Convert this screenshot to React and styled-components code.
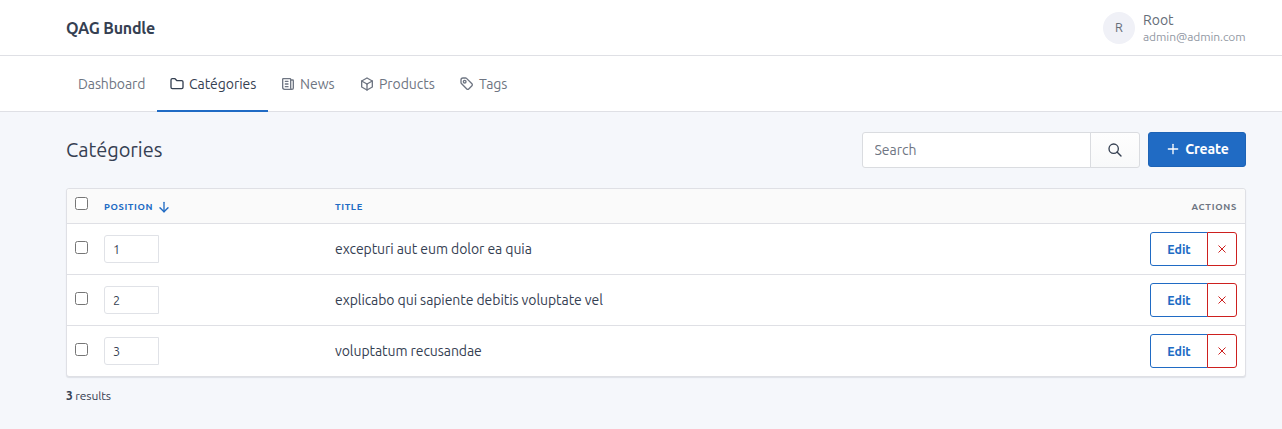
import React from 'react';
import styled, { createGlobalStyle, css } from 'styled-components';
import { TbFolder, TbNews, TbBox, TbSearch, TbPlus, TbArrowDown } from 'react-icons/tb';

const BLUE = '#206bc4';
const RED = '#cd201f';
const INK = '#354052';
const MUTED = '#6e7582';
const LINE = '#dfe0e5';

const GlobalStyle = createGlobalStyle`
  *, *::before, *::after { box-sizing: border-box; }
  body {
    margin: 0;
    min-height: 100vh;
    background: #f5f7fb;
    color: ${INK};
    font: 400 14px/20px Ubuntu, "Noto Sans", sans-serif;
  }
  button, input { font-family: inherit; color: inherit; }
`;

const Text = styled.span`
  letter-spacing: ${(p) => p.$track || 0}px;
  white-space: nowrap;
`;

const Bar = styled.div`
  height: 56px;
  padding: 0 36px 0 66px;
  display: flex;
  align-items: center;
  background: #fff;
  border-bottom: 1px solid ${LINE};
`;

const TopBar = styled(Bar)`
  justify-content: space-between;
`;

const Brand = styled.div`
  font-size: 16px;
  font-weight: 570;
`;

const User = styled.div`
  display: flex;
  align-items: center;
  gap: 8px;
  width: 143px;
`;

const Avatar = styled.div`
  width: 32px;
  height: 32px;
  flex: none;
  padding-bottom: 1px;
  border-radius: 50%;
  background: #f0f1f7;
  color: #656d77;
  font-size: 12.5px;
  display: flex;
  align-items: center;
  justify-content: center;
`;

const UserText = styled.div`
  display: flex;
  flex-direction: column;
  padding-top: 2px;
  color: #656d77;
`;

const UserName = styled(Text)`
  line-height: 16px;
`;

const UserMail = styled(Text)`
  font-size: 12px;
  line-height: 17px;
  color: #9299a4;
`;

const NavItem = styled.a`
  width: ${(p) => p.$width}px;
  height: 56px;
  align-self: flex-start;
  flex: none;
  padding-left: 12px;
  display: flex;
  align-items: center;
  gap: 4px;
  color: ${MUTED};
  border-bottom: 2px solid transparent;
  padding-top: 1px;
  svg { flex: none; }
  ${(p) => p.$active && css`
    color: ${INK};
    border-bottom-color: ${BLUE};
  `}
`;

const Page = styled.main`
  padding: 20px 36px 0 66px;
`;

const PageHeader = styled.header`
  height: 36px;
  display: flex;
  align-items: flex-start;
`;

const Title = styled.h1`
  margin: 0 auto 0 0;
  font-size: 20px;
  font-weight: 400;
  line-height: 36px;
`;

const SearchGroup = styled.form`
  display: flex;
  margin-right: 8px;
`;

const SearchInput = styled.input`
  width: 229px;
  height: 36px;
  padding: 0 11.5px;
  font-size: 14px;
  border: 1px solid #dadce0;
  border-radius: 3px 0 0 3px;
  background: #fff;
  &::placeholder { color: ${MUTED}; opacity: 1; }
`;

const SearchButton = styled.button`
  width: 50px;
  height: 36px;
  margin-left: -1px;
  padding: 0;
  display: flex;
  align-items: center;
  justify-content: center;
  border: 1px solid #dadce0;
  border-radius: 0 3px 3px 0;
  background: linear-gradient(#fefefe, #f8f9fa);
`;

const CreateButton = styled.button`
  width: 98px;
  height: 35px;
  padding: 0 0 1px;
  display: flex;
  align-items: center;
  justify-content: center;
  gap: 4px;
  border: 1px solid #1d63b6;
  border-radius: 3px;
  background: ${BLUE};
  color: #fff;
  font-size: 14px;
  font-weight: 590;
`;

const Card = styled.section`
  margin-top: 20px;
  border: 1px solid ${LINE};
  border-radius: 3px;
  background: #fff;
  box-shadow: 0 1px 1px rgba(53, 64, 82, 0.12);
`;

const Row = styled.div`
  display: grid;
  grid-template-columns: 29px 231px 1fr auto;
  align-items: center;
  height: ${(p) => (p.$head ? 35 : 51)}px;
  border-bottom: 1px solid ${LINE};
  &:last-child { border-bottom: 0; height: 50px; }
  ${(p) => p.$head && css`
    background: #fafafa;
    border-radius: 3px 3px 0 0;
  `}
`;

const Cell = styled.div`
  padding: 0 8px;
  display: flex;
  align-items: center;
`;

const HeadCell = styled(Cell)`
  gap: 3px;
  padding-top: 1px;
  font-size: 9.4px;
  font-weight: 580;
  line-height: 16px;
  text-transform: uppercase;
  color: ${(p) => (p.$sortable ? BLUE : MUTED)};
`;

const Check = styled.input.attrs({ type: 'checkbox' })`
  width: 13px;
  height: 13px;
  flex: none;
  margin: 0 0 ${(p) => p.$lift || 3}px;
`;

const PositionInput = styled.input`
  width: 55px;
  height: 28px;
  padding: 0 8px 1px;
  font-size: 12.6px;
  border: 1px solid #e0e2e7;
  border-radius: 3px 0 0 3px;
  background: #fff;
`;

const RowButton = styled.button`
  height: 34px;
  padding: 0;
  display: flex;
  align-items: center;
  justify-content: center;
  background: #fff;
  font-size: 12.4px;
  font-weight: 590;
`;

const EditButton = styled(RowButton)`
  width: 58px;
  border: 1px solid ${BLUE};
  border-radius: 3px 0 0 3px;
  color: ${BLUE};
`;

const DeleteButton = styled(RowButton)`
  width: 30px;
  margin-left: -1px;
  border: 1px solid ${RED};
  border-radius: 0 3px 3px 0;
  color: ${RED};
`;

const Results = styled.div`
  margin-top: 10px;
  font-size: 12px;
  line-height: 18px;
  b { font-weight: 600; }
`;

function TagIcon({ size }) {
  return (
    <svg width={size} height={size} viewBox="0 0 24 24" fill="none" stroke="currentColor" strokeWidth="2" strokeLinecap="round" strokeLinejoin="round">
      <circle cx="8.5" cy="8.5" r="2" />
      <path d="M4 7v3.859c0 .537 .213 1.052 .593 1.432l8.116 8.116a2.025 2.025 0 0 0 2.864 0l4.834 -4.834a2.025 2.025 0 0 0 0 -2.864l-8.117 -8.116a2.025 2.025 0 0 0 -1.431 -.593h-3.859a3 3 0 0 0 -3 3" transform="translate(-1 -1)" />
    </svg>
  );
}

const nav = [
  { label: 'Dashboard', width: 91, track: -0.1 },
  { label: 'Catégories', width: 111, track: -0.05, icon: TbFolder, active: true },
  { label: 'News', width: 79, track: 0, icon: TbNews },
  { label: 'Products', width: 100, track: -0.05, icon: TbBox },
  { label: 'Tags', width: 72, track: -0.05, icon: TagIcon },
];

const rows = [
  { position: 1, title: 'excepturi aut eum dolor ea quia', track: -0.07 },
  { position: 2, title: 'explicabo qui sapiente debitis voluptate vel', track: -0.07 },
  { position: 3, title: 'voluptatum recusandae', track: -0.07 },
];

function CrossIcon() {
  return (
    <svg width="8" height="8" viewBox="0 0 8 8" fill="none" stroke="currentColor" strokeWidth="1">
      <path d="M0.5 0.5l7 7M7.5 0.5l-7 7" />
    </svg>
  );
}

export default function App() {
  return (
    <>
      <GlobalStyle />
      <TopBar>
        <Brand><Text $track={-0.2}>QAG Bundle</Text></Brand>
        <User>
          <Avatar>R</Avatar>
          <UserText>
            <UserName>Root</UserName>
            <UserMail $track={-0.08}>admin@admin.com</UserMail>
          </UserText>
        </User>
      </TopBar>
      <Bar as="nav">
        {nav.map(({ label, width, track, icon: Icon, active }) => (
          <NavItem key={label} $width={width} $active={active}>
            {Icon && <Icon size={16} />}
            <Text $track={track}>{label}</Text>
          </NavItem>
        ))}
      </Bar>
      <Page>
        <PageHeader>
          <Title><Text $track={-0.05}>Catégories</Text></Title>
          <SearchGroup>
            <SearchInput placeholder="Search" />
            <SearchButton type="button" aria-label="Search"><TbSearch size={16} /></SearchButton>
          </SearchGroup>
          <CreateButton>
            <TbPlus size={16} />
            <Text $track={-0.1}>Create</Text>
          </CreateButton>
        </PageHeader>
        <Card>
          <Row $head>
            <Cell><Check $lift={6} /></Cell>
            <HeadCell $sortable>
              <Text $track={0.6}>Position</Text>
              <TbArrowDown size={16} />
            </HeadCell>
            <HeadCell $sortable><Text $track={0.6}>Title</Text></HeadCell>
            <HeadCell><Text $track={0.7}>Actions</Text></HeadCell>
          </Row>
          {rows.map((row) => (
            <Row key={row.position}>
              <Cell><Check /></Cell>
              <Cell><PositionInput defaultValue={row.position} /></Cell>
              <Cell><Text $track={row.track}>{row.title}</Text></Cell>
              <Cell>
                <EditButton>Edit</EditButton>
                <DeleteButton aria-label="Delete"><CrossIcon /></DeleteButton>
              </Cell>
            </Row>
          ))}
        </Card>
        <Results><Text $track={-0.1}><b>3</b> results</Text></Results>
      </Page>
    </>
  );
}
